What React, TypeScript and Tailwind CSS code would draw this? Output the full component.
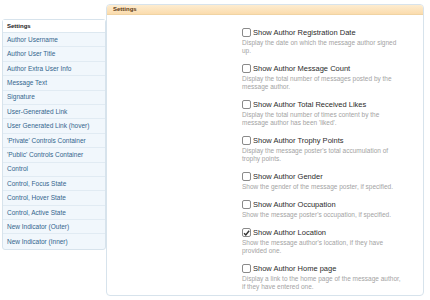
import React from 'react';

const navItems = [
  'Author Username',
  'Author User Title',
  'Author Extra User Info',
  'Message Text',
  'Signature',
  'User-Generated Link',
  'User Generated Link (hover)',
  "'Private' Controls Container",
  "'Public' Controls Container",
  'Control',
  'Control, Focus State',
  'Control, Hover State',
  'Control, Active State',
  'New Indicator (Outer)',
  'New Indicator (Inner)',
];

const options = [
  { label: 'Show Author Registration Date', desc: 'Display the date on which the message author signed up.', checked: false },
  { label: 'Show Author Message Count', desc: 'Display the total number of messages posted by the message author.', checked: false },
  { label: 'Show Author Total Received Likes', desc: "Display the total number of times content by the message author has been 'liked'.", checked: false },
  { label: 'Show Author Trophy Points', desc: "Display the message poster's total accumulation of trophy points.", checked: false },
  { label: 'Show Author Gender', desc: 'Show the gender of the message poster, if specified.', checked: false },
  { label: 'Show Author Occupation', desc: "Show the message poster's occupation, if specified.", checked: false },
  { label: 'Show Author Location', desc: "Show the message author's location, if they have provided one.", checked: true },
  { label: 'Show Author Home page', desc: 'Display a link to the home page of the message author, if they have entered one.', checked: false },
];

const Checkbox: React.FC<{ checked: boolean }> = ({ checked }) => (
  <span className="w-[9px] h-[9px] rounded-[2px] border border-[#8a8a8a] bg-white flex items-center justify-center shrink-0">
    {checked && (
      <svg viewBox="0 0 10 10" className="w-[8px] h-[8px]">
        <path d="M1.5 5.2 L4 7.8 L8.8 1.8" fill="none" stroke="#333" strokeWidth="2" />
      </svg>
    )}
  </span>
);

const App: React.FC = () => {
  return (
    <div className="w-[430px] h-[300px] bg-white overflow-hidden flex items-start pl-[2px] pr-[6px] pt-[4px]" style={{ fontFamily: '"Liberation Sans", Arial, sans-serif' }}>
      <div className="w-[104px] mt-[15px] border border-[#d7e3ec] rounded-[3px] bg-[#f1f7fc] shrink-0 z-10">
        <div className="h-[13px] px-[4px] flex items-center bg-white text-[6px] font-bold text-[#222] border-b border-[#dde8f0]">Settings</div>
        {navItems.map((item, i) => (
          <div key={item} className={`h-[14.4px] px-[4px] flex items-center text-[6.5px] whitespace-nowrap text-[#33658c] ${i < navItems.length - 1 ? 'border-b border-[#e1ebf3]' : ''}`}>
            {item}
          </div>
        ))}
      </div>
      <div className="flex-1 h-[292px] border border-[#d7e3ec] rounded-[4px] flex flex-col">
        <div className="h-[14px] px-[6px] flex items-center bg-gradient-to-b from-[#fdecd0] to-[#fbdcad] border-b border-[#f0d3a3] rounded-t-[3px] text-[6px] font-bold text-[#5c3a12]">
          Settings
        </div>
        <div className="pl-[135px] pt-[12px]">
          {options.map((o) => (
            <div key={o.label} className="mb-[8px]">
              <div className="h-[11px] flex items-center gap-[2px]">
                <Checkbox checked={o.checked} />
                <span className="text-[7.5px] text-[#2b2b2b] whitespace-nowrap">{o.label}</span>
              </div>
              <div className="mt-[1px] w-[162px] text-[6.5px] leading-[8px] text-[#a3a3a3]">{o.desc}</div>
            </div>
          ))}
        </div>
      </div>
    </div>
  );
};

export default App;
